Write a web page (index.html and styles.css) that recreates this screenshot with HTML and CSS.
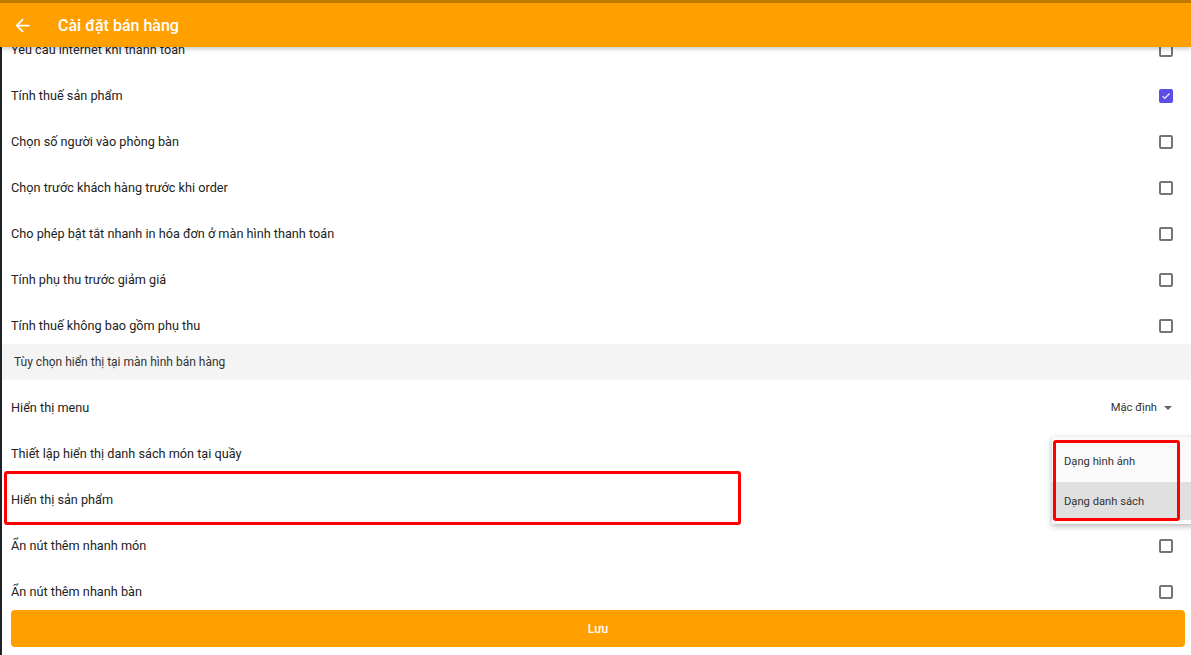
FILE: index.html
```html
<!DOCTYPE html>
<html lang="vi">
<head>
    <meta charset="UTF-8">
    <meta name="viewport" content="width=device-width, initial-scale=1.0">
    <title>Cài đặt bán hàng</title>
    <link rel="stylesheet" href="styles.css">
</head>
<body>

<div class="app">
    <div class="status-strip"></div>
    <header class="appbar">
        <svg class="back" viewBox="0 0 24 24" width="21" height="21"><path d="M20 11H7.83l5.59-5.59L12 4l-8 8 8 8 1.41-1.41L7.83 13H20v-2z" fill="#fff"/></svg>
        <span class="title">Cài đặt bán hàng</span>
    </header>

    <div class="content">
        <div class="list">
            <div class="row"><span>Yêu cầu internet khi thanh toán</span><span class="check"></span></div>
            <div class="row"><span>Tính thuế sản phẩm</span><span class="check checked"><svg viewBox="0 0 24 24" width="14" height="14"><path d="M9 16.2 4.8 12l-1.4 1.4L9 19 21 7l-1.4-1.4z" fill="#fff" stroke="#fff" stroke-width="0.8"/></svg></span></div>
            <div class="row"><span>Chọn số người vào phòng bàn</span><span class="check"></span></div>
            <div class="row"><span>Chọn trước khách hàng trước khi order</span><span class="check"></span></div>
            <div class="row"><span>Cho phép bật tắt nhanh in hóa đơn ở màn hình thanh toán</span><span class="check"></span></div>
            <div class="row"><span>Tính phụ thu trước giảm giá</span><span class="check"></span></div>
            <div class="row"><span>Tính thuế không bao gồm phụ thu</span><span class="check"></span></div>

            <div class="section">Tùy chọn hiển thị tại màn hình bán hàng</div>

            <div class="row"><span>Hiển thị menu</span><span class="select">Mặc định <i class="caret"></i></span></div>
            <div class="row"><span>Thiết lập hiển thị danh sách món tại quầy</span></div>
            <div class="row"><span>Hiển thị sản phẩm</span><span class="mark-row"></span></div>
            <div class="row"><span>Ẩn nút thêm nhanh món</span><span class="check"></span></div>
            <div class="row"><span>Ẩn nút thêm nhanh bàn</span><span class="check"></span></div>
        </div>

        <div class="popup">
            <div class="popup-item">Dạng hình ảnh</div>
            <div class="popup-item active">Dạng danh sách</div>
            <span class="mark-popup"></span>
        </div>
    </div>

    <div class="footer">
        <button class="save">Lưu</button>
    </div>
</div>

</body>
</html>
```

FILE: styles.css
```css
* {
    box-sizing: border-box;
}
body {
    margin: 0;
    font-family: Roboto, "Noto Sans", Arial, sans-serif;
    background: #fff;
    color: #222;
}
.app {
    height: 655px;
    display: flex;
    flex-direction: column;
    overflow: hidden;
}
.status-strip {
    height: 3px;
    background: #c27b00;
}
.appbar {
    height: 44px;
    background: #ffa000;
    display: flex;
    align-items: center;
    padding-left: 12px;
    position: relative;
    z-index: 2;
    box-shadow: 0 2px 4px rgba(0, 0, 0, 0.22);
}
.back {
    display: block;
}
.title {
    color: #fff;
    font-size: 16px;
    font-weight: 500;
    margin-left: 25px;
}
.content {
    flex: 1;
    position: relative;
    overflow: hidden;
    border-left: 2px solid #1d2228;
}
.list {
    margin-top: -25px;
}
.row {
    height: 46px;
    display: flex;
    align-items: flex-start;
    justify-content: space-between;
    padding: 20px 18px 0 9px;
    font-size: 12.7px;
    line-height: 16px;
    position: relative;
}
.check {
    width: 14px;
    height: 14px;
    border: 2px solid #757575;
    border-radius: 2px;
    margin-top: 1px;
    display: flex;
    align-items: center;
    justify-content: center;
}
.check.checked {
    background: #5b4ee6;
    border-color: #5b4ee6;
}
.section {
    height: 36px;
    background: #f4f4f4;
    font-size: 12px;
    color: #333;
    display: flex;
    align-items: center;
    padding-left: 12px;
}
.select {
    font-size: 11.2px;
    color: #333;
    display: flex;
    align-items: center;
    margin-right: 1px;
}
.caret {
    width: 0;
    height: 0;
    border-left: 4px solid transparent;
    border-right: 4px solid transparent;
    border-top: 4px solid #666;
    margin-left: 7px;
}
.mark-row {
    position: absolute;
    left: 2px;
    top: -1px;
    width: 737px;
    height: 54px;
    border: 3px solid #f00;
    border-radius: 3px;
}
.popup {
    position: absolute;
    left: 1050px;
    top: 390px;
    width: 150px;
    background: #fafafa;
    padding-top: 4px;
    box-shadow: 0 2px 6px rgba(0, 0, 0, 0.3);
    z-index: 3;
}
.popup-item {
    height: 41px;
    display: flex;
    align-items: center;
    padding-left: 12px;
    font-size: 11.2px;
    color: #333;
}
.popup-item.active {
    background: #e0e0e0;
    height: 38px;
    margin-bottom: 4px;
}
.mark-popup {
    position: absolute;
    left: 1px;
    top: 3px;
    width: 127px;
    height: 81px;
    border: 3px solid #f00;
    border-radius: 3px;
}
.footer {
    height: 56px;
    padding: 11px 6px 8px 9px;
    border-left: 2px solid #1d2228;
    background: #fff;
}
.save {
    width: 100%;
    height: 37px;
    border: none;
    border-radius: 4px;
    background: #ffa000;
    color: #fff;
    font-family: Roboto, "Noto Sans", Arial, sans-serif;
    font-size: 12px;
    font-weight: 500;
}
```
